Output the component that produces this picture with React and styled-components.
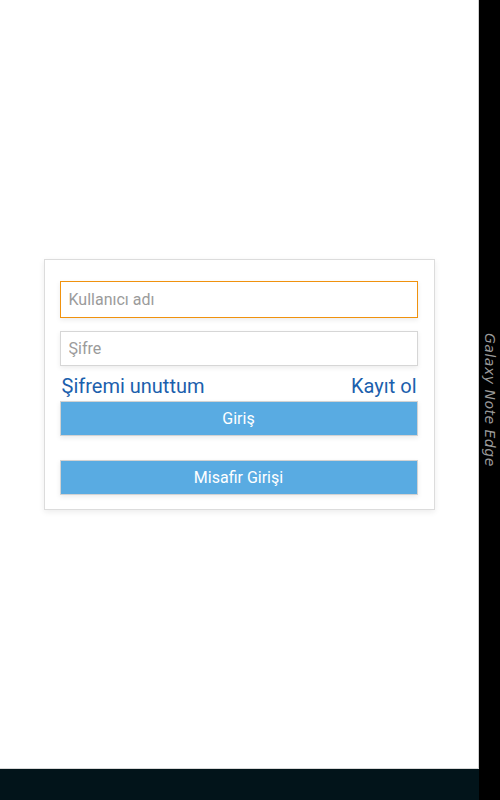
import React, { useState } from 'react';
import styled, { createGlobalStyle } from 'styled-components';

const GlobalStyle = createGlobalStyle`
  html, body {
    margin: 0;
    padding: 0;
    background: #fff;
  }
  * {
    box-sizing: border-box;
  }
`;

const Screen = styled.div`
  display: flex;
  flex-direction: column;
  width: 500px;
  height: 800px;
  font-family: Roboto, "Liberation Sans", sans-serif;
`;

const Top = styled.div`
  display: flex;
  flex: 1;
`;

const Main = styled.div`
  flex: 1;
  display: flex;
  align-items: center;
  justify-content: center;
  background: #fff;
  border-right: 1px solid #cfcfcf;
  border-bottom: 1px solid #d8d8d8;
`;

const EdgeStrip = styled.div`
  width: 21px;
  background: #000;
  display: flex;
  align-items: center;
  justify-content: center;
`;

const EdgeLabel = styled.span`
  writing-mode: vertical-rl;
  font-family: "DejaVu Sans", sans-serif;
  font-style: italic;
  font-weight: 200;
  font-size: 14px;
  color: #9a9a9a;
  letter-spacing: 0.5px;
  margin-top: 30px;
`;

const NavBar = styled.div`
  height: 31px;
  display: flex;
`;

const NavFill = styled.div`
  flex: 1;
  background: #02141a;
`;

const NavEdge = styled.div`
  width: 21px;
  background: #000;
`;

const Card = styled.form`
  width: 391px;
  padding: 21px 16px 14px 15px;
  border: 1px solid #dcdcdc;
  background: #fff;
  box-shadow: 0 2px 6px rgba(0, 0, 0, 0.08);
  display: flex;
  flex-direction: column;
`;

const Input = styled.input`
  display: block;
  width: 100%;
  height: ${(p) => (p.$focused ? 37 : 35)}px;
  padding: 0 8px;
  margin-bottom: 13px;
  border: 1px solid ${(p) => (p.$focused ? '#f0920e' : '#d6d6d6')};
  background: #fff;
  font-family: Roboto, "Liberation Sans", sans-serif;
  font-size: 16px;
  color: #333;
  outline: none;
  box-shadow: 0 2px 5px rgba(0, 0, 0, 0.08);

  &::placeholder {
    color: #9b9b9b;
  }
`;

const LinkRow = styled.div`
  display: flex;
  justify-content: space-between;
  align-items: center;
  margin-top: -6px;
  padding: 0 1px 0 2px;
  height: 26px;
`;

const TextLink = styled.a`
  color: #1c5fad;
  font-size: 20px;
  text-decoration: none;
  cursor: pointer;
`;

const Button = styled.button`
  display: block;
  width: 100%;
  height: 35px;
  margin-top: ${(p) => p.$gap || 0}px;
  border: 1px solid #d2d2d2;
  background: #59abe2;
  color: #fff;
  font-family: Roboto, "Liberation Sans", sans-serif;
  font-size: 16px;
  cursor: pointer;
  box-shadow: 0 2px 5px rgba(0, 0, 0, 0.08);
`;

export default function App() {
  const [username, setUsername] = useState('');
  const [password, setPassword] = useState('');

  return (
    <Screen>
      <GlobalStyle />
      <Top>
        <Main>
          <Card onSubmit={(e) => e.preventDefault()}>
            <Input
              $focused
              type="text"
              placeholder="Kullanıcı adı"
              value={username}
              onChange={(e) => setUsername(e.target.value)}
            />
            <Input
              type="password"
              placeholder="Şifre"
              value={password}
              onChange={(e) => setPassword(e.target.value)}
            />
            <LinkRow>
              <TextLink>Şifremi unuttum</TextLink>
              <TextLink>Kayıt ol</TextLink>
            </LinkRow>
            <Button type="submit" $gap={2}>Giriş</Button>
            <Button type="button" $gap={24}>Misafir Girişi</Button>
          </Card>
        </Main>
        <EdgeStrip>
          <EdgeLabel>Galaxy Note Edge</EdgeLabel>
        </EdgeStrip>
      </Top>
      <NavBar>
        <NavFill />
        <NavEdge />
      </NavBar>
    </Screen>
  );
}
